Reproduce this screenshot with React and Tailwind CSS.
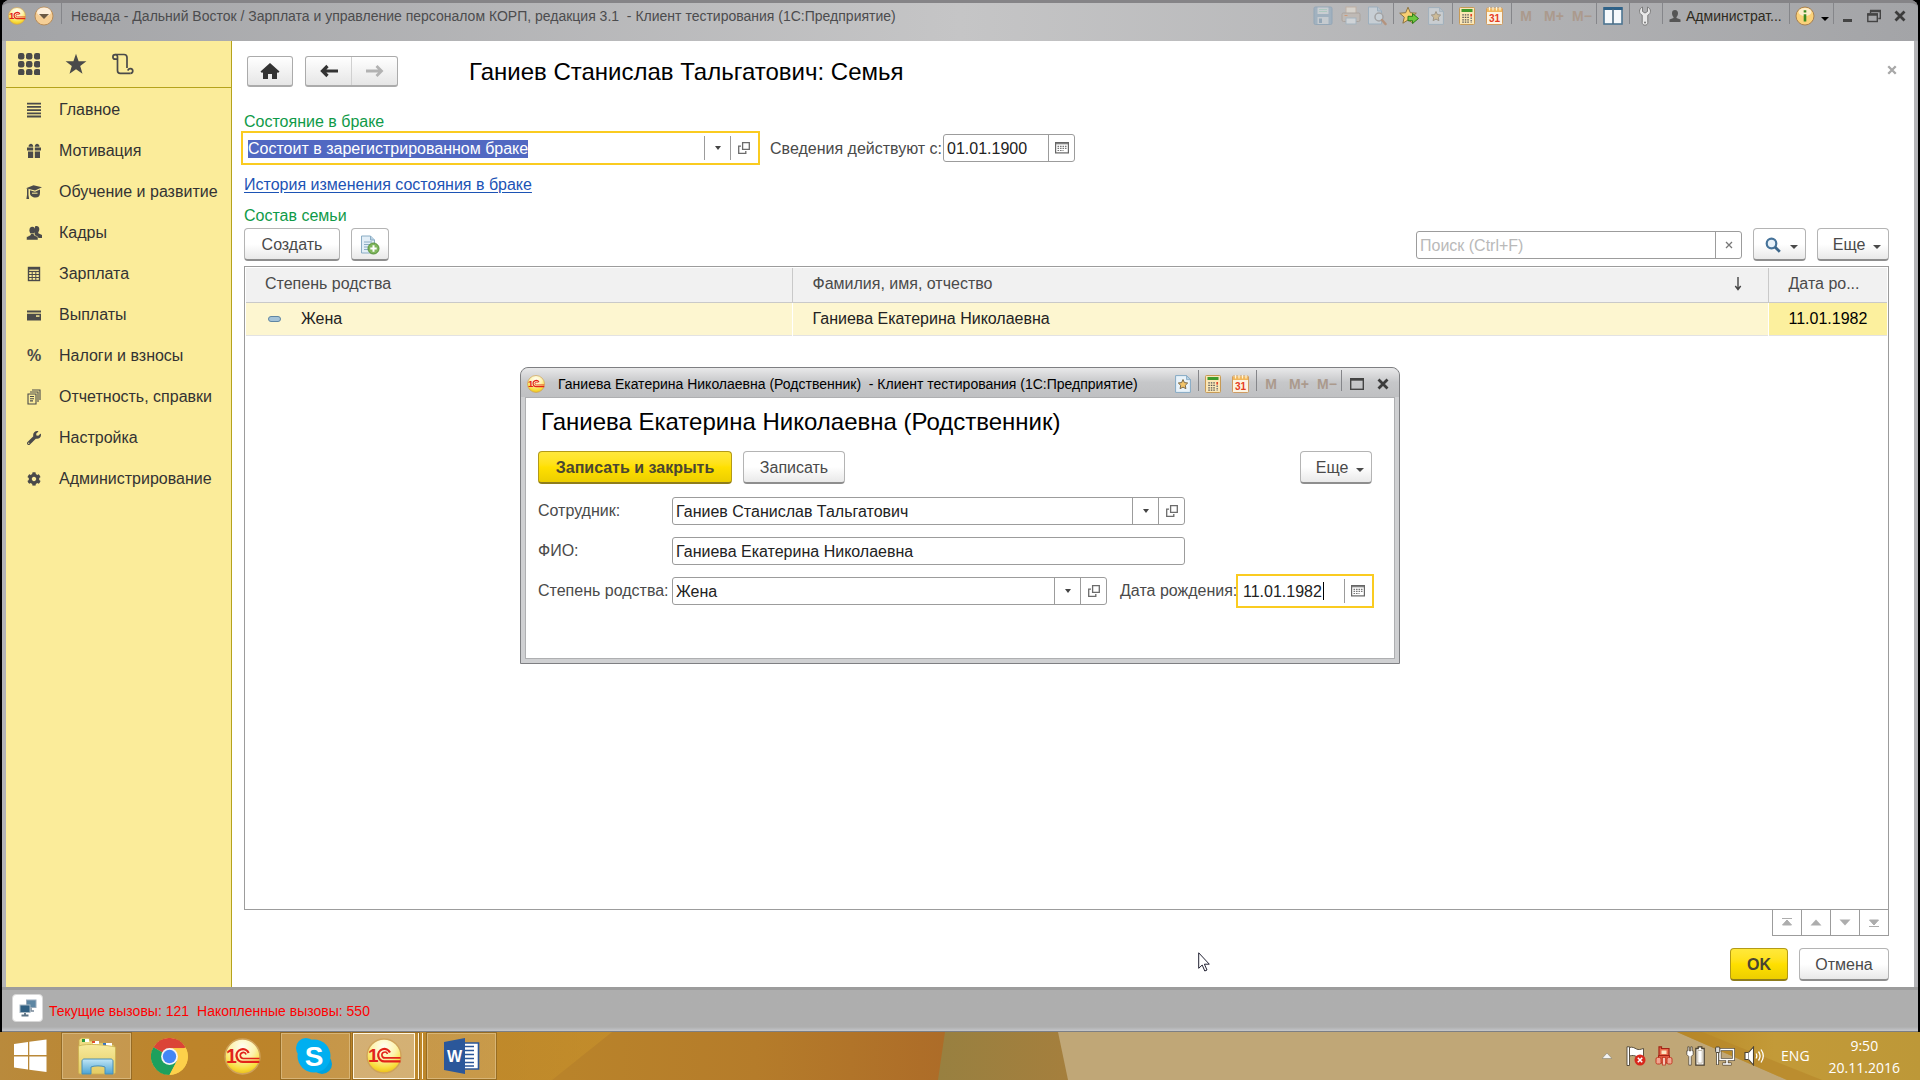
import { useEffect, useRef } from "react";
import { FaCog, FaWrench } from "react-icons/fa";

/* ---------- icons ---------- */

function Logo1C({ className }) {
  return (
    <svg viewBox="0 0 36 36" className={className} aria-hidden="true">
      <defs>
        <radialGradient id="ball" cx="50%" cy="22%" r="80%">
          <stop offset="0" stopColor="#fffef2" />
          <stop offset="0.45" stopColor="#fdf3ae" />
          <stop offset="0.8" stopColor="#f8dc3a" />
          <stop offset="1" stopColor="#e8b818" />
        </radialGradient>
      </defs>
      <circle cx="18" cy="18" r="17" fill="url(#ball)" stroke="#cfa25a" strokeWidth="1.4" />
      <text x="2" y="24" fontFamily="Liberation Sans" fontWeight="700" fontSize="19" fill="#e2231a">1</text>
      <g fill="none" stroke="#e2231a">
        <path d="M24 14.500A6.200 6.200 0 1 0 18.800 23.300H34.500" strokeWidth="2.200" />
        <path d="M21.500 16A2.900 2.900 0 1 0 19 19.900H34.500" strokeWidth="1.600" />
      </g>
    </svg>
  );
}

const Caret = ({ className = "" }) => (
  <svg viewBox="0 0 8 4" className={"h-1 w-2 " + className} aria-hidden="true">
    <path d="M0 0h8L4 4z" fill="currentColor" />
  </svg>
);

const SmallCaret = () => (
  <svg viewBox="0 0 6 4" className="h-1 w-1.5" aria-hidden="true">
    <path d="M0 0h6L3 4z" fill="currentColor" />
  </svg>
);

const OpenIcon = () => (
  <svg viewBox="0 0 12 12" className="size-3" fill="none" stroke="#6b6b6b" strokeWidth="1.3" aria-hidden="true">
    <path d="M4.6 0.7h6.7v6.7H4.6z" />
    <path d="M3 4.2H0.7v7.1h7.1V9" />
  </svg>
);

const CalendarSmall = () => (
  <svg viewBox="0 0 14 12" className="h-3 w-3.5" aria-hidden="true">
    <rect x="0.6" y="0.6" width="12.8" height="10.3" fill="#fff" stroke="#666" strokeWidth="1.2" />
    <path d="M1 1.7h12" stroke="#777" strokeWidth="1.2" />
    <path d="M2.5 4.3h9M2.5 6.4h9M2.5 8.5h6" stroke="#777" strokeWidth="1.2" strokeDasharray="1.6 .9" />
  </svg>
);

const SaveIcon = () => (
  <svg viewBox="0 0 20 20" className="size-5 opacity-40" aria-hidden="true">
    <rect x="1" y="1" width="18" height="17.5" rx="1.5" fill="#7fa8c8" stroke="#5f8db2" />
    <rect x="4.5" y="1.5" width="11" height="6.5" fill="#e4eef5" />
    <path d="M6 3.5h8M6 5.5h8" stroke="#8db" strokeWidth="0.8" />
    <rect x="4.5" y="11" width="11" height="7" fill="#d9e6ef" />
    <rect x="6" y="12.5" width="3" height="4.5" fill="#5f8db2" />
  </svg>
);
const PrintIcon = () => (
  <svg viewBox="0 0 20 20" className="size-5 opacity-45" aria-hidden="true">
    <rect x="5" y="1" width="10" height="7" fill="#fdf3e2" stroke="#c9a98a" />
    <rect x="1" y="7" width="18" height="8.5" rx="1.5" fill="#c9bdb1" stroke="#9c8b7d" />
    <rect x="5" y="12" width="10" height="6" fill="#eef6fc" stroke="#8fb0c6" />
    <path d="M3.5 9.5h3" stroke="#e8752a" />
  </svg>
);
const PreviewIcon = () => (
  <svg viewBox="0 0 20 20" className="size-5 opacity-45" aria-hidden="true">
    <path d="M1.5 1h9l4 4v13h-13z" fill="#dcebf6" stroke="#7ea6c4" />
    <path d="M10.500 1v4h4" fill="#b6d0e4" stroke="#7ea6c4" />
    <circle cx="12" cy="11" r="4" fill="#dff0fb" stroke="#8b8b8b" strokeWidth="1.5" />
    <path d="M15 14l3.500 4" stroke="#b26a38" strokeWidth="2.500" strokeLinecap="round" />
  </svg>
);
const StarArrowIcon = () => (
  <svg viewBox="0 0 20 20" className="size-5" aria-hidden="true">
    <path d="M9 1.200l2.300 5.500 6 .5-4.600 4 1.400 6L9 14l-5.100 3.200 1.400-6-4.600-4 6-.5z" fill="#f8cf74" stroke="#8c7444" />
    <path d="M9 10.300h4.500V7.500l6 5-6 5v-2.800H9z" fill="#6cc83e" stroke="#2f7a1a" />
  </svg>
);
const StarPageIcon = ({ dim }) => (
  <svg viewBox="0 0 16 18" className={dim ? "h-[18px] w-4 opacity-40" : "h-[18px] w-4"} aria-hidden="true">
    <path d="M.6.6h11l3.800 4v12.800H.6z" fill="#e9f3fa" stroke="#84a9c4" />
    <path d="M11.500.6v4h4z" fill="#b9d2e4" stroke="#84a9c4" strokeWidth=".8" />
    <path d="M8 4.500l1.400 3.100 3.300.4-2.400 2.300.6 3.400L8 12.100l-2.900 1.600.6-3.400L3.300 8l3.300-.4z" fill="#f3c468" stroke="#7d6a48" />
  </svg>
);
const CalcIcon = () => (
  <svg viewBox="0 0 16 18" className="h-[18px] w-4" aria-hidden="true">
    <rect x=".5" y=".5" width="15" height="17" rx="1" fill="#fbe7b6" stroke="#c79a55" />
    <rect x="2.500" y="2" width="11" height="3" fill="#3f9a2c" />
    <path d="M3.300 7.800h6.500M3.300 10.300h6.500M3.300 12.800h6.500M3.300 15.200h6.500" stroke="#555" strokeWidth="1.300" strokeDasharray="1.500 1" />
    <path d="M12.200 7v2.600" stroke="#e0452a" strokeWidth="1.700" />
    <path d="M12.200 10.500v5.500" stroke="#777" strokeWidth="1.500" strokeDasharray="1.500 1" />
  </svg>
);
const Cal31Icon = () => (
  <svg viewBox="0 0 17 18" className="h-[18px] w-[17px]" aria-hidden="true">
    <rect x=".5" y="1" width="16" height="16.500" rx="1" fill="#fdf4e3" stroke="#cf9c62" />
    <path d="M1 1.500h15v3.500H1z" fill="#f1b75c" />
    <path d="M3.500 0v3.500M7 0v3.500M10.500 0v3.500M14 0v3.500" stroke="#fff3d4" strokeWidth="1.200" />
    <text x="8.500" y="15" textAnchor="middle" fontFamily="Liberation Sans" fontWeight="700" fontSize="10" fill="#e63c1e">31</text>
  </svg>
);
const SplitIcon = () => (
  <svg viewBox="0 0 20 18" className="h-[18px] w-5" aria-hidden="true">
    <rect x="1" y="1" width="18" height="16" fill="#f6f9fb" stroke="#4d7592" strokeWidth="1.600" />
    <path d="M.5 1.500h19" stroke="#2f6288" strokeWidth="3" />
    <path d="M10 2v15" stroke="#4d6a80" strokeWidth="1.600" />
  </svg>
);
const ToolIcon = () => (
  <svg viewBox="0 0 12 20" className="h-5 w-3" aria-hidden="true">
    <path d="M3.500 1v4.500L6 7l2.500-1.500V1c2 .9 3 2.500 3 4.200 0 2-1.200 3.300-2.700 4v7.500c0 1.500-1.200 2.500-2.800 2.500s-2.800-1-2.800-2.500V9.200C1.700 8.500.5 7.200.5 5.200.5 3.500 1.500 1.900 3.500 1z" fill="#e9e9e9" stroke="#7c7c7c" />
    <circle cx="6" cy="16.500" r="1" fill="#777" />
  </svg>
);
const InfoIcon = () => (
  <svg viewBox="0 0 20 20" className="size-5" aria-hidden="true">
    <circle cx="10" cy="10" r="9" fill="#fbd27a" stroke="#a98150" />
    <ellipse cx="10" cy="6" rx="6.500" ry="4" fill="#fff" opacity=".6" />
    <path d="M10 4.200v2.300" stroke="#3a8a20" strokeWidth="2.600" />
    <path d="M10 8.200v7.300" stroke="#3a8a20" strokeWidth="2.600" />
  </svg>
);
const CloseX = ({ className }) => (
  <svg viewBox="0 0 12 12" className={className} aria-hidden="true">
    <path d="M1.500 1.500l9 9M10.500 1.500l-9 9" stroke="currentColor" strokeWidth="2.800" />
  </svg>
);

const menuIcons = {
  list: (
    <path d="M1 1.700h14M1 4.900h14M1 8.100h14M1 11.300h14M1 14.500h14" stroke="currentColor" strokeWidth="1.800" />
  ),
  gift: (
    <path d="M1 4.500h6.200v3H1zM8.800 4.500H15v3H8.800zM2 8.500h5.200V15H2zM8.800 8.500H14V15H8.800zM2.500 3.800C2.500 1.500 4 .8 5 .8s2 .8 2.300 3zM8.700 3.800C9 1.600 10 .8 11 .8s2.500.7 2.500 3z" fill="currentColor" />
  ),
  cap: (
    <g fill="currentColor">
      <path d="M0 4.200L7.500 1.200 16 3.200 9 6.400z" />
      <path d="M4 6.300l5 1.500 5-2.300v3.400c0 3-1.600 4.600-4.500 4.600S4 11.800 4 9.200z" />
      <path d="M1 4.500h1.500V11l.6 4H.4l.6-4z" />
      <path d="M6 9.200h5.500" stroke="#fbec9a" strokeWidth="1" />
    </g>
  ),
  people: (
    <g fill="currentColor">
      <path d="M9 1.500c2-1 4.300 0 4.300 2.500 0 1.500-.5 2.500-1 3.200v1l3.700 1.800V13h-4.500L8.500 9.800z" />
      <ellipse cx="6.300" cy="5.300" rx="2.900" ry="3.600" />
      <path d="M.5 15v-3l4-2V8.500h3.500V10l4 2v3z" stroke="#fbec9a" strokeWidth=".5" />
    </g>
  ),
  calc: (
    <g fill="none" stroke="currentColor">
      <rect x="2.500" y="1.500" width="11" height="13" strokeWidth="1.400" />
      <path d="M2.500 2.800h11" strokeWidth="1.600" />
      <path d="M2.500 5.500h11" strokeWidth="1.200" />
      <path d="M2.500 8.500h11M2.500 11.500h11M6.200 5v9.500M9.800 5v9.500" strokeWidth="1" />
    </g>
  ),
  card: (
    <g fill="currentColor">
      <path d="M1 3.500h14v2H1z" />
      <path d="M1 6.700h14v6.800H1z" />
      <path d="M10 8.300h3.500v1.500H10z" fill="#fbec9a" />
    </g>
  ),
  docs: (
    <g fill="none" stroke="currentColor" strokeWidth="1.100">
      <path d="M2 5h8v10H2z" />
      <path d="M4 3h8v10M6 1h8v10" />
      <path d="M4 7.500h4M4 9.700h4M4 11.900h3" />
    </g>
  ),
};

function MenuIcon({ name }) {
  if (name === "percent") return <span className="w-4 text-center text-base leading-4 font-bold">%</span>;
  if (name === "wrench") return <FaWrench className="size-4 p-px" />;
  if (name === "gear") return <FaCog className="size-4 p-px" />;
  return (
    <svg viewBox="0 0 16 16" className="size-4" aria-hidden="true">
      {menuIcons[name]}
    </svg>
  );
}

/* ---------- shared controls ---------- */

function Btn({ children, className = "", primary, ...rest }) {
  const look = primary
    ? "border-[#b39a17] border-b-[#8f7d1c] bg-linear-to-b from-[#ffe83a] via-[#ffe000] to-[#ecce00] font-bold text-[#4a4632]"
    : "border-[#b4b4b4] border-b-[#8e8e8e] bg-linear-to-b from-white via-white to-[#e9e9e9] text-[#4a4a4a]";
  return (
    <button type="button" className={"flex h-[33px] shrink-0 items-center justify-center rounded border border-b-2 pt-0.5 " + look + " " + className} {...rest}>
      {children}
    </button>
  );
}

function FieldButton({ label, children }) {
  return (
    <button type="button" aria-label={label} className="flex w-[26px] shrink-0 items-center justify-center border-l border-[#9c9c9c] text-[#444]">
      {children}
    </button>
  );
}

function Field({ active, className = "", children, inputRef, ...rest }) {
  const look = active ? "h-[34px] border-2 border-[#facb20] py-[3px] pr-0.5 pl-[2px]" : "h-7 rounded-[3px] border border-[#9c9c9c]";
  return (
    <div className={"flex bg-white " + look + " " + className}>
      <input
        ref={inputRef}
        className="w-0 min-w-0 flex-1 bg-transparent px-[3px] pt-0.5 text-base leading-[18px] text-[#222] outline-none selection:bg-[#5168c2] selection:text-white placeholder:text-[#b9b9b9]"
        {...rest}
      />
      {children}
    </div>
  );
}

const Sep = () => <span className="h-[21px] w-px shrink-0 self-start bg-[#85868a]" />;

function Tool({ label, className = "w-7", children }) {
  return (
    <button type="button" aria-label={label} className={"flex h-[26px] shrink-0 items-center justify-center " + className}>
      {children}
    </button>
  );
}

function MemoryTools() {
  return (
    <>
      {["M", "M+", "M−"].map((t) => (
        <button key={t} type="button" className="h-[26px] w-7 shrink-0 text-center text-sm font-bold text-[#ab9a8d]">
          {t}
        </button>
      ))}
    </>
  );
}

/* ---------- main window ---------- */

function TitleBar() {
  return (
    <header className="flex h-[41px] shrink-0 items-start overflow-hidden rounded-t-lg border-t-[3px] border-[#858487] bg-linear-to-r from-[#a3a4a7] via-[#c5c5c6] to-[#a3a4a7] px-[5px]">
      <Tool label="1С" className="w-5">
        <Logo1C className="size-[18px]" />
      </Tool>
      <Tool label="Меню" className="w-[34px]">
        <svg viewBox="0 0 20 20" className="size-5" aria-hidden="true">
          <circle cx="10" cy="10" r="9" fill="#f6cf96" stroke="#b98d58" />
          <ellipse cx="10" cy="6" rx="7" ry="4.500" fill="#fff" opacity=".65" />
          <path d="M5 8h10l-5 5z" fill="#6b5a45" />
        </svg>
      </Tool>
      <Sep />
      <h1 className="ml-[9px] min-w-0 flex-1 truncate text-sm leading-[26px] whitespace-pre text-[#4c4c4e]">
        Невада - Дальний Восток / Зарплата и управление персоналом КОРП, редакция 3.1  - Клиент тестирования (1С:Предприятие)
      </h1>
      <Tool label="Сохранить"><SaveIcon /></Tool>
      <Tool label="Печать"><PrintIcon /></Tool>
      <Tool label="Просмотр" className="w-7 pr-1"><PreviewIcon /></Tool>
      <Sep />
      <Tool label="Добавить в избранное" className="w-[29px]"><StarArrowIcon /></Tool>
      <Tool label="Избранное" className="w-[29px] pr-1"><StarPageIcon dim /></Tool>
      <Sep />
      <Tool label="Калькулятор" className="w-[29px] pr-0.5"><CalcIcon /></Tool>
      <Tool label="Календарь" className="w-[29px] pr-1"><Cal31Icon /></Tool>
      <Sep />
      <MemoryTools />
      <Sep />
      <Tool label="Панели" className="w-8"><SplitIcon /></Tool>
      <Sep />
      <Tool label="Сервис" className="w-8 pr-0.5"><ToolIcon /></Tool>
      <Sep />
      <button type="button" className="flex h-[26px] w-[126px] shrink-0 items-center gap-[5px] pl-[6px] text-sm text-[#2e2a20]">
        <svg viewBox="0 0 12 12" className="size-3 shrink-0" aria-hidden="true">
          <path d="M6 0c2 0 3 1.300 3 3.200S8 6.500 7.500 7v1L11.500 9.500V12H.5V9.500L4.500 8V7C4 6.500 3 5.200 3 3.200S4 0 6 0z" fill="#555" />
        </svg>
        Администрат...
      </button>
      <Sep />
      <Tool label="Справка" className="w-[43px]">
        <InfoIcon />
        <Caret className="mt-1.5 ml-1.5" />
      </Tool>
      <Sep />
      <Tool label="Свернуть" className="w-[27px]"><span className="mt-2 h-[3px] w-[9px] bg-[#444]" /></Tool>
      <Tool label="Восстановить" className="w-[26px]">
        <svg viewBox="0 0 14 14" className="size-3.5" fill="none" stroke="#444" strokeWidth="1.400" aria-hidden="true">
          <path d="M3.500 4V2.200h9.800v7.300h-2" />
          <path d="M3 2h11" strokeWidth="2.400" />
          <rect x=".8" y="5" width="9.500" height="7.500" />
          <path d="M.3 5.500h10.500" strokeWidth="2.400" />
        </svg>
      </Tool>
      <Tool label="Закрыть" className="w-[26px]"><CloseX className="size-3 text-[#3c3c3c]" /></Tool>
    </header>
  );
}

const menu = [
  ["list", "Главное"],
  ["gift", "Мотивация"],
  ["cap", "Обучение и развитие"],
  ["people", "Кадры"],
  ["calc", "Зарплата"],
  ["card", "Выплаты"],
  ["percent", "Налоги и взносы"],
  ["docs", "Отчетность, справки"],
  ["wrench", "Настройка"],
  ["gear", "Администрирование"],
];

function Sidebar() {
  return (
    <aside className="w-[226px] shrink-0 border-r border-[#b5a31c] bg-[#fbec9a] text-[#4a4a4a]">
      <div className="flex h-[47px] items-center gap-[25px] border-b border-[#b5a31c] pl-3">
        <button type="button" aria-label="Меню функций">
          <svg viewBox="0 0 22 22" className="size-[22px]" fill="currentColor" aria-hidden="true">
            {[0, 8, 16].map((y) => [0, 8, 16].map((x) => <rect key={x + "-" + y} x={x} y={y} width="6.400" height="6.400" rx="2.200" />))}
          </svg>
        </button>
        <button type="button" aria-label="Избранное">
          <svg viewBox="0 0 22 22" className="size-[22px]" fill="currentColor" aria-hidden="true">
            <path d="M11 .8l2.600 7.400 7.800.1-6.200 4.800 2.300 7.600L11 16.200l-6.500 4.500 2.300-7.600L.6 8.300l7.800-.1z" />
          </svg>
        </button>
        <button type="button" aria-label="История">
          <svg viewBox="0 0 22 22" className="size-[22px]" fill="none" stroke="currentColor" strokeWidth="1.700" aria-hidden="true">
            <path d="M5.500 6.200H3.200A2.300 2.300 0 1 1 5.500 3.800V17.500c0 1.700 1 2.900 2.700 2.900h10.300" />
            <path d="M3.500 1.500H12c2 0 3 1 3 3V15" />
            <path d="M18.500 20.400a2.400 2.400 0 1 0-2.500-2.700" />
          </svg>
        </button>
      </div>
      <nav className="pt-px">
        {menu.map(([icon, label]) => (
          <a key={label} href="#" className="flex h-[41px] items-center gap-[17px] pl-5 text-base text-[#333]">
            <span className="flex text-[#4a4a4a]"><MenuIcon name={icon} /></span>
            {label}
          </a>
        ))}
      </nav>
    </aside>
  );
}

function FamilyTable() {
  const head = "border-b border-[#c9c9c9] bg-[#f1f1f1] pb-0.5 text-left font-normal text-[#4a4a4a]";
  return (
    <div className="mt-[5px] flex-1 border border-[#9c9c9c] p-px pb-0">
      <table className="w-full table-fixed border-collapse text-base">
        <colgroup>
          <col className="w-[546px]" />
          <col />
          <col className="w-[119px]" />
        </colgroup>
        <thead>
          <tr className="h-[34px]">
            <th className={head + " border-r pl-[19px]"}>Степень родства</th>
            <th className={head + " border-r pr-[26px] pl-5"}>
              <span className="flex items-center justify-between">
                Фамилия, имя, отчество
                <svg viewBox="0 0 8 14" className="h-3.5 w-2" aria-hidden="true">
                  <path d="M4 0v12M1.300 9L4 12.500 6.700 9" fill="none" stroke="#444" strokeWidth="1.400" />
                </svg>
              </span>
            </th>
            <th className={head + " pl-5"}>Дата ро...</th>
          </tr>
        </thead>
        <tbody>
          <tr className="h-[33px] border-b border-[#e3e3e3] bg-[#fdf6d0] text-[#222]">
            <td className="border-r border-white pl-[22px]">
              <span className="flex items-center gap-5">
                <span className="h-1.5 w-[13px] rounded-sm border border-[#5f86a3] bg-[#a5c3d8]" />
                Жена
              </span>
            </td>
            <td className="border-r border-white pl-5">Ганиева Екатерина Николаевна</td>
            <td className="bg-[#fcf09e] pl-5 text-black">11.01.1982</td>
          </tr>
        </tbody>
      </table>
    </div>
  );
}

const navArrows = [
  ["В начало", "M3 1.500h10M8 3l4.500 5h-9z", true],
  ["Вверх", "M8 2.500l5.500 6h-11z"],
  ["Вниз", "M8 8.500l5.500-6h-11z"],
  ["В конец", "M3 9.500h10M8 8l4.500-5h-9z", true],
];

function Content() {
  const ref = useRef(null);
  useEffect(() => {
    ref.current.focus();
    ref.current.select();
  }, []);
  return (
    <main className="relative flex min-w-0 flex-1 flex-col bg-white pt-[15px] pr-[25px] pb-1.5 pl-3 text-base leading-[18px]">
      <div className="flex h-[31px] items-center">
        <button type="button" aria-label="Домой" className="ml-[3px] flex h-[31px] w-[46px] items-center justify-center rounded-[3px] border border-b-2 border-[#ababab] bg-linear-to-b from-white to-[#e6e6e6]">
          <svg viewBox="0 0 20 16" className="h-4 w-5" aria-hidden="true">
            <path d="M10 0l9.500 8.500-1.500 1.500-1-.8V16h-5v-5H8v5H3V9.200l-1 .8L.5 8.500z" fill="#333" />
          </svg>
        </button>
        <div className="ml-3 flex h-[31px] w-[93px] rounded-[3px] border border-b-2 border-[#ababab] bg-linear-to-b from-white to-[#e6e6e6]">
          <button type="button" aria-label="Назад" className="flex flex-1 items-center justify-center border-r border-[#d0d0d0] text-[#333]">
            <svg viewBox="0 0 18 14" className="h-3.5 w-[18px]" aria-hidden="true">
              <path d="M7.500 2L2.500 7l5 5M3 7H18" fill="none" stroke="currentColor" strokeWidth="3.200" />
            </svg>
          </button>
          <button type="button" aria-label="Вперед" className="flex flex-1 items-center justify-center text-[#b2b2b2]">
            <svg viewBox="0 0 18 14" className="h-3.5 w-[18px]" aria-hidden="true">
              <path d="M10.500 2l5 5-5 5M15 7H0" fill="none" stroke="currentColor" strokeWidth="2.800" />
            </svg>
          </button>
        </div>
        <h2 className="ml-[71px] flex-1 text-2xl leading-[29px] text-black">Ганиев Станислав Тальгатович: Семья</h2>
        <button type="button" aria-label="Закрыть форму" className="-mr-2 mb-1 flex"><CloseX className="size-2.5 text-[#a8a8a8]" /></button>
      </div>

      <label htmlFor="marital" className="mt-[26px] self-start text-[#0f9a48]">Состояние в браке</label>
      <div className="-ml-[3px] flex h-[34px] items-center">
        <Field id="marital" active inputRef={ref} className="w-[519px]" defaultValue="Состоит в зарегистрированном браке">
          <FieldButton label="Выбрать"><SmallCaret /></FieldButton>
          <FieldButton label="Открыть"><OpenIcon /></FieldButton>
        </Field>
        <label htmlFor="since" className="ml-[10px] w-[173px] pt-px text-[#4a4a4a]">Сведения действуют с:</label>
        <Field id="since" className="w-[132px]" defaultValue="01.01.1900">
          <FieldButton label="Календарь"><CalendarSmall /></FieldButton>
        </Field>
      </div>
      <a href="#" className="mt-[11px] self-start text-[#1c53b5] underline underline-offset-2">История изменения состояния в браке</a>
      <h3 className="mt-[13px] text-[#0f9a48]">Состав семьи</h3>
      <div className="mt-[3px] flex items-center">
        <Btn className="w-24">Создать</Btn>
        <Btn className="ml-[11px] w-[38px]" aria-label="Создать копированием">
          <svg viewBox="0 0 20 20" className="size-5" aria-hidden="true">
            <path d="M1.500 1h9l4 4v13h-13z" fill="#e2eef7" stroke="#8aacc4" />
            <path d="M10.500 1v4h4" fill="#b9d2e4" stroke="#8aacc4" />
            <path d="M4 7h8M4 9.500h6M4 12h4M4 14.500h4" stroke="#8aacc4" />
            <circle cx="13.500" cy="13.500" r="5.500" fill="#7fb65c" stroke="#56903a" />
            <path d="M13.500 10.300v6.400M10.300 13.500h6.400" stroke="#fff" strokeWidth="2" />
          </svg>
        </Btn>
        <Field className="ml-auto w-[326px]" placeholder="Поиск (Ctrl+F)" aria-label="Поиск">
          <FieldButton label="Очистить">
            <svg viewBox="0 0 8 8" className="size-2" aria-hidden="true"><path d="M1 1l6 6M7 1L1 7" stroke="#777" strokeWidth="1.300" /></svg>
          </FieldButton>
        </Field>
        <Btn className="ml-[11px] w-[53px] gap-[9px] pl-1" aria-label="Найти">
          <svg viewBox="0 0 16 16" className="size-4" aria-hidden="true">
            <circle cx="6.500" cy="6.500" r="4.800" fill="#e8f2fa" stroke="#46739a" strokeWidth="2.200" />
            <path d="M10 10l4.800 4.800" stroke="#3d678b" strokeWidth="2.800" />
          </svg>
          <Caret className="mt-1" />
        </Btn>
        <Btn className="ml-[11px] w-[72px] gap-2 pl-2">Еще<Caret className="mt-1" /></Btn>
      </div>
      <FamilyTable />
      <div className="ml-auto flex h-[26px] border-b border-l border-[#9c9c9c]">
        {navArrows.map(([label, d, bar]) => (
          <button key={label} type="button" aria-label={label} className="flex w-[29px] items-center justify-center border-r border-[#9c9c9c]">
            <svg viewBox="0 0 16 11" className="h-[11px] w-4" fill="#adadad" stroke={bar ? "#adadad" : "none"} aria-hidden="true"><path d={d} /></svg>
          </button>
        ))}
      </div>
      <div className="mt-3 flex justify-end gap-[11px]">
        <Btn primary className="w-[58px]">OK</Btn>
        <Btn className="w-[90px]">Отмена</Btn>
      </div>
    </main>
  );
}

/* ---------- dialog window ---------- */

function RelativeDialog() {
  const label = "w-[134px] shrink-0 text-[#4a4a4a]";
  return (
    <section role="dialog" aria-label="Родственник" className="absolute top-[367px] left-1/2 flex h-[297px] w-[880px] -translate-x-1/2 flex-col rounded-t-lg border border-[#7e7f82] bg-[#cfd0d2] px-1 pb-1 text-base leading-[18px]">
      <div className="-mx-1 flex h-[29px] shrink-0 items-center rounded-t-lg bg-linear-to-b from-[#e9e9ea] via-[#c6c7c9] to-[#bfc0c2] pt-0.5 pr-1 pl-1.5">
        <Logo1C className="size-[18px]" />
        <h2 className="ml-[13px] min-w-0 flex-1 truncate text-sm leading-[26px] whitespace-pre text-black">
          Ганиева Екатерина Николаевна (Родственник)  - Клиент тестирования (1С:Предприятие)
        </h2>
        <Tool label="Избранное" className="w-[29px] pr-0.5"><StarPageIcon /></Tool>
        <Sep />
        <Tool label="Калькулятор" className="w-[29px] pr-0.5"><CalcIcon /></Tool>
        <Tool label="Календарь" className="w-7 pr-1"><Cal31Icon /></Tool>
        <Sep />
        <MemoryTools />
        <Sep />
        <Tool label="Развернуть" className="w-[29px]">
          <svg viewBox="0 0 14 12" className="h-3 w-3.5" fill="none" stroke="#444" aria-hidden="true">
            <rect x=".7" y=".7" width="12.600" height="10.600" strokeWidth="1.400" />
            <path d="M0 1.500h14" strokeWidth="2.400" />
          </svg>
        </Tool>
        <Tool label="Закрыть" className="w-6"><CloseX className="size-3 text-[#3c3c3c]" /></Tool>
      </div>
      <div className="flex flex-1 flex-col border border-[#aeafb1] bg-white pt-2.5 pl-3">
        <h3 className="pl-[3px] text-2xl leading-7 text-black">Ганиева Екатерина Николаевна (Родственник)</h3>
        <div className="mt-[15px] mr-[22px] flex gap-[11px]">
          <Btn primary className="w-[194px]">Записать и закрыть</Btn>
          <Btn className="w-[102px]">Записать</Btn>
          <Btn className="ml-auto w-[72px] gap-2 pl-2">Еще<Caret className="mt-1" /></Btn>
        </div>
        <div className="mt-[13px] flex h-7 items-center">
          <label htmlFor="emp" className={label}>Сотрудник:</label>
          <Field id="emp" className="w-[513px]" defaultValue="Ганиев Станислав Тальгатович">
            <FieldButton label="Выбрать"><SmallCaret /></FieldButton>
            <FieldButton label="Открыть"><OpenIcon /></FieldButton>
          </Field>
        </div>
        <div className="mt-3 flex h-7 items-center">
          <label htmlFor="fio" className={label}>ФИО:</label>
          <Field id="fio" className="w-[513px]" defaultValue="Ганиева Екатерина Николаевна" />
        </div>
        <div className="mt-3 flex h-7 items-center">
          <label htmlFor="rel" className={label}>Степень родства:</label>
          <Field id="rel" className="w-[435px]" defaultValue="Жена">
            <FieldButton label="Выбрать"><SmallCaret /></FieldButton>
            <FieldButton label="Открыть"><OpenIcon /></FieldButton>
          </Field>
          <label htmlFor="birth" className="ml-[13px] w-[116px] whitespace-nowrap text-[#4a4a4a]">Дата рождения:</label>
          <div className="relative">
            <Field id="birth" active className="w-[138px]" defaultValue="11.01.1982">
              <FieldButton label="Календарь"><CalendarSmall /></FieldButton>
            </Field>
            <span className="absolute top-2 left-[87px] h-[18px] w-px bg-black" />
          </div>
        </div>
      </div>
    </section>
  );
}

/* ---------- status bar and taskbar ---------- */

function StatusBar() {
  return (
    <footer className="flex h-[45px] shrink-0 items-start border-t-[3px] border-b border-t-[#9c9c9c] border-b-[#7c7e84] bg-linear-to-b from-[#aeaeae] from-90% to-[#c4c6ca] pt-1 pl-2.5 text-sm text-[#ff0000]">
      <button type="button" aria-label="Соединение" className="flex h-7 w-[31px] items-center justify-center rounded-sm border border-[#d8d8d8] bg-white">
        <svg viewBox="0 0 18 18" className="size-[18px]" aria-hidden="true">
          <rect x="7.500" y="1" width="9.500" height="7.500" fill="#5d86a3" stroke="#9ab" />
          <path d="M12 9v3h3" fill="none" stroke="#789" strokeWidth="1.500" />
          <rect x="1" y="6" width="10" height="7.500" fill="#2f5f82" stroke="#a8b8c4" />
          <path d="M6 14v1.500M2.500 16.500h7" stroke="#5b7284" strokeWidth="1.800" />
        </svg>
      </button>
      <p className="ml-1.5 flex gap-2 pt-2 leading-[18px]">
        <span>Текущие вызовы: 121</span>
        <span>Накопленные вызовы: 550</span>
      </p>
    </footer>
  );
}

function TaskButton({ label, className = "", open, children }) {
  const look = open ? "border border-[#e3c894]/60 bg-white/15 outline outline-[#7d5a1e]/60" : "";
  return (
    <button type="button" aria-label={label} className={"flex h-[46px] shrink-0 items-center justify-center " + look + " " + className}>
      {children}
    </button>
  );
}

function Taskbar() {
  return (
    <footer className="relative flex h-12 shrink-0 items-center overflow-hidden bg-[#c2a878] text-sm text-white">
      <svg viewBox="0 0 1920 48" preserveAspectRatio="none" className="absolute inset-0 size-full" aria-hidden="true">
        <defs>
          <linearGradient id="wood" gradientUnits="userSpaceOnUse" x1="0" y1="0" x2="945" y2="0">
            <stop offset="0" stopColor="#b98a3c" />
            <stop offset=".2" stopColor="#bd842a" />
            <stop offset=".6" stopColor="#b9832a" />
            <stop offset=".8" stopColor="#b57c2a" />
            <stop offset="1" stopColor="#ad6c28" />
          </linearGradient>
          <linearGradient id="glow" gradientUnits="userSpaceOnUse" x1="300" y1="0" x2="600" y2="0">
            <stop offset="0" stopColor="#c8922b" stopOpacity="0" />
            <stop offset="1" stopColor="#c8922b" stopOpacity=".6" />
          </linearGradient>
          <linearGradient id="olive">
            <stop offset="0" stopColor="#988040" />
            <stop offset="1" stopColor="#a57f3d" />
          </linearGradient>
          <linearGradient id="gold">
            <stop offset="0" stopColor="#b98a28" />
            <stop offset=".4" stopColor="#c39a38" />
            <stop offset="1" stopColor="#bd9838" />
          </linearGradient>
        </defs>
        <path d="M0 0h946l-7 48H0z" fill="url(#wood)" />
        <path d="M300 0h312l-60 48H300z" fill="url(#glow)" />
        <path d="M945 0h114l10 48H938z" fill="url(#olive)" />
        <path d="M1058 0h620l110 48h-720z" fill="#c0a777" />
        <path d="M1677 0h243v48h-133z" fill="url(#gold)" />
        <path d="M1677 0h25l120 48h-35z" fill="#b5862a" opacity=".6" />
      </svg>
      <nav className="relative flex items-center">
        <TaskButton label="Пуск" className="w-[62px] pr-0.5">
          <svg viewBox="0 0 34 34" className="size-[34px]" fill="#fff" aria-hidden="true">
            <path d="M1 5l14-2v13H1zM16.300 2.800L33.500.5V16H16.300zM1 17.500h14V30.500l-14-2zM16.300 17.500h17.200V33l-17.200-2.300z" />
          </svg>
        </TaskButton>
        <TaskButton label="Проводник" open className="w-[69px]">
          <svg viewBox="0 0 40 40" className="size-10" aria-hidden="true">
            <defs>
              <linearGradient id="fold" x2="0" y2="1"><stop offset="0" stopColor="#f7ea9c" /><stop offset="1" stopColor="#e5cb62" /></linearGradient>
              <linearGradient id="tray" x2="0" y2="1"><stop offset="0" stopColor="#c2e6f6" /><stop offset="1" stopColor="#4ba3d2" /></linearGradient>
            </defs>
            <path d="M4 2h8l1 3h7l1 2h9l1 2h6v4H2V4z" fill="#efdc83" stroke="#c7a94a" strokeWidth=".8" />
            <path d="M6 3h6v3H6zM16 5h6v3h-6zM27 7h8v3h-8z" fill="#fff" />
            <path d="M5 3h3v3H5z" fill="#2c9a3c" /><path d="M15 5h3v2h-3z" fill="#e2502a" /><path d="M26 7h3v3h-3z" fill="#2f6fc4" />
            <path d="M1.500 10c8-3 28-1 37 1v25c0 1-.8 2-2 2H3c-1 0-1.500-1-1.500-2z" fill="url(#fold)" stroke="#cbb04f" strokeWidth=".8" />
            <path d="M5 25c0-1 1-2 2-2h27c1 0 2 1 2 2v13h-8v-7c-3-1.500-11-1.500-14 0v7H5z" fill="url(#tray)" stroke="#4a8fb5" />
          </svg>
        </TaskButton>
        <TaskButton label="Chrome" className="w-[76px]">
          <svg viewBox="0 0 36 36" className="size-[37px]" aria-hidden="true">
            <circle cx="18" cy="18" r="18" fill="#fdd04a" />
            <path d="M18 18L2.400 9A18 18 0 0 1 33.600 9L32 10H18z" fill="#db4437" />
            <path d="M2.400 9A18 18 0 0 0 18 36L25 22.500 18 18z" fill="#1da05d" />
            <path d="M18 10H33.900A18 18 0 0 1 18 36l7.500-14z" fill="#fdd04a" />
            <circle cx="18" cy="18" r="8.200" fill="#f4f4f4" />
            <circle cx="18" cy="18" r="6.500" fill="#4486f4" />
          </svg>
        </TaskButton>
        <TaskButton label="1С" className="w-[70px]"><Logo1C className="size-[37px]" /></TaskButton>
        <TaskButton label="Skype" open className="ml-1 w-[69px] pr-1">
          <svg viewBox="0 0 38 38" className="size-[38px]" aria-hidden="true">
            <circle cx="11" cy="11" r="10" fill="#00aff0" />
            <circle cx="27" cy="27" r="10" fill="#00a2e0" />
            <circle cx="19" cy="19" r="16.500" fill="#00aff0" />
            <text x="19" y="28.500" textAnchor="middle" fontFamily="Liberation Sans" fontWeight="700" fontSize="28" fill="#fff">S</text>
          </svg>
        </TaskButton>
        <button type="button" aria-label="1С:Предприятие" className="ml-[3px] flex h-[46px] w-[70px] shrink-0 border-r border-[#fff6e0]">
          <span className="mr-[3px] flex h-full flex-1 border-r border-[#fff6e0] outline outline-[#7d5a1e]/60">
            <span className="mr-[3px] flex h-full flex-1 items-center justify-center border border-[#fff6e0] bg-white/35">
              <Logo1C className="size-[36px]" />
            </span>
          </span>
        </button>
        <TaskButton label="Word" open className="ml-1 w-[69px]">
          <svg viewBox="0 0 36 36" className="size-9" aria-hidden="true">
            <path d="M18 5h16.500v26H18z" fill="#fff" stroke="#2a5699" strokeWidth="1.600" />
            <path d="M20 8.500h10M20 12.500h10M20 16.500h10M20 20.500h10M20 24.500h10M20 28h10" stroke="#2a5699" strokeWidth="1.500" />
            <path d="M0 4L21 0v36L0 32z" fill="#2b579a" />
            <text x="10.500" y="24" textAnchor="middle" fontFamily="Liberation Sans" fontWeight="700" fontSize="16" fill="#fff">W</text>
          </svg>
        </TaskButton>
      </nav>
      <div className="relative ml-auto flex items-center gap-[9px] pr-5 font-['Open_Sans','Noto_Sans',sans-serif]">
        <button type="button" aria-label="Показать скрытые значки" className="mr-[5px]">
          <svg viewBox="0 0 10 6" className="h-1.5 w-2.5" aria-hidden="true"><path d="M5 0l5 5.500H0z" fill="#f3f3f3" stroke="#776" strokeWidth=".5" /></svg>
        </button>
        <svg viewBox="0 0 20 20" className="size-5" aria-hidden="true">
          <path d="M1 .8h2.500V19.500H1z" fill="#fff" stroke="#4c4334" strokeWidth=".9" />
          <path d="M3.500 1.500c3-1 5 .5 7 1.500s4 .5 7-.5v8c-3 1-5 1-7 0s-4-1.500-7-.5z" fill="#fff" stroke="#4c4334" strokeWidth=".9" />
          <circle cx="14" cy="14" r="5.500" fill="#d8281c" />
          <path d="M11.800 11.800l4.400 4.400M16.200 11.800l-4.400 4.400" stroke="#fff" strokeWidth="1.600" />
        </svg>
        <svg viewBox="0 0 18 20" className="h-5 w-[18px]" aria-hidden="true">
          <path d="M4 4V.800h2.500V2.500H14v7H4z" fill="#e8694a" stroke="#a32416" strokeWidth="1.200" />
          <rect x="6.500" y="4.500" width="5" height="3.500" fill="#fbe3c0" />
          <path d="M3.500 9.500h11V17h-11z" fill="#e0553c" stroke="#a32416" />
          <rect x="1" y="11.500" width="5" height="6.500" rx="1.500" fill="#f0a590" stroke="#c33a24" />
          <rect x="12" y="11.500" width="5" height="6.500" rx="1.500" fill="#f0a590" stroke="#c33a24" />
          <rect x="7.500" y="11.500" width="3" height="7.500" fill="#f6c8b8" stroke="#c33a24" strokeWidth=".8" />
        </svg>
        <svg viewBox="0 0 20 20" className="ml-1 size-5" aria-hidden="true">
          <path d="M1.800.800v4H.8v3.700L2.800 10.500V19.200h2.400V10.500l2-2V4.800h-1v-4H4.800v4H3.200v-4z" fill="#fff" stroke="#4c4334" strokeWidth=".8" />
          <path d="M9.800 2.500h2.400V.9h3.600v1.600h2.400v16.600H9.800z" fill="#fff" stroke="#4c4334" strokeWidth="1.300" />
          <path d="M11.800 4.500h4.400v12.600h-4.400z" fill="#fff" stroke="#8a7a5c" strokeWidth=".5" />
        </svg>
        <svg viewBox="0 0 20 20" className="size-5" aria-hidden="true">
          <rect x="5" y="3.500" width="13.500" height="10" fill="none" stroke="#4c4334" strokeWidth="2.800" />
          <path d="M12 14v4M7.500 18h9" stroke="#4c4334" strokeWidth="3" />
          <rect x="5" y="3.500" width="13.500" height="10" fill="none" stroke="#fff" strokeWidth="1.500" />
          <path d="M12 14v4M8 18h8" stroke="#fff" strokeWidth="1.600" />
          <path d="M2.500 6v13" stroke="#4c4334" strokeWidth="2.800" />
          <path d="M2.500 5v13.500" stroke="#fff" strokeWidth="1.300" />
          <rect x=".6" y="1" width="4.200" height="5.500" rx="1" fill="#ddd" stroke="#4c4334" />
        </svg>
        <svg viewBox="0 0 20 20" className="size-5" aria-hidden="true">
          <path d="M1 6.500h3.500L9.500 1v18l-5-5.500H1z" fill="#fff" stroke="#4c4334" strokeWidth="1.100" />
          <path d="M4.500 6.500v7" stroke="#999" />
          <path d="M12 7.500c1 1.500 1 3.500 0 5M14.500 5.500c2 2.800 2 6.200 0 9M17 3.500c2.800 4 2.800 9 0 13" fill="none" stroke="#fff" strokeWidth="1.300" />
        </svg>
        <span className="ml-2">ENG</span>
        <time className="ml-2.5 flex flex-col pt-0.5 text-center leading-[22px]">
          <span>9:50</span>
          <span>20.11.2016</span>
        </time>
      </div>
    </footer>
  );
}

export default function App() {
  return (
    <div className="relative flex h-screen flex-col overflow-hidden bg-black font-['Liberation_Sans',Arial,sans-serif]">
      <div className="mx-[2px] flex min-h-0 flex-1 flex-col rounded-t-lg bg-[#b3b3b6]">
        <TitleBar />
        <div className="mx-1 flex min-h-0 flex-1">
          <Sidebar />
          <Content />
        </div>
        <StatusBar />
      </div>
      <Taskbar />
      <RelativeDialog />
      <svg viewBox="0 0 12 20" className="absolute top-[952px] left-[1198px] h-5 w-3" aria-hidden="true">
        <path d="M.7.800v15.500l3.500-3.300 2.600 6 2.200-1-2.600-5.800h4.900z" fill="#fff" stroke="#223" strokeWidth="1" />
      </svg>
    </div>
  );
}
